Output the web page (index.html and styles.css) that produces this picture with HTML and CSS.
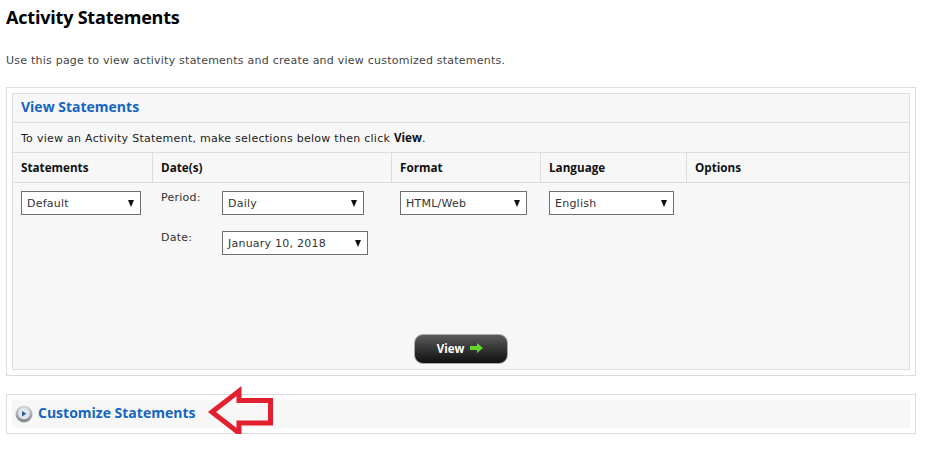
FILE: index.html
```html
<!DOCTYPE html>
<html lang="en">
<head>
<meta charset="utf-8">
<title>Activity Statements</title>
<link rel="stylesheet" href="styles.css">
</head>
<body>
<main class="page">
  <h1 class="page-title">Activity Statements</h1>
  <p class="intro">Use this page to view activity statements and create and view customized statements.</p>

  <section class="panel">
    <div class="panel-inner">
      <h2 class="row row-title section-title">View Statements</h2>
      <p class="row row-hint">To view an Activity Statement, make selections below then click <b>View</b>.</p>
      <div class="grid grid-head">
        <div class="cell">Statements</div>
        <div class="cell">Date(s)</div>
        <div class="cell">Format</div>
        <div class="cell">Language</div>
        <div class="cell">Options</div>
      </div>
      <div class="grid grid-body">
        <div class="col"><div class="select w-statement"><span>Default</span><i class="caret"></i></div></div>
        <div class="col col-dates">
          <div class="date-row">
            <span class="date-label">Period:</span>
            <div class="select w-period"><span>Daily</span><i class="caret"></i></div>
          </div>
          <div class="date-row">
            <span class="date-label">Date:</span>
            <div class="select w-date"><span>January 10, 2018</span><i class="caret"></i></div>
          </div>
        </div>
        <div class="col"><div class="select w-format"><span>HTML/Web</span><i class="caret"></i></div></div>
        <div class="col"><div class="select w-language"><span>English</span><i class="caret"></i></div></div>
        <div class="col"></div>
      </div>
      <div class="actions">
        <button class="view-btn" type="button">View
          <svg class="view-arrow" width="13" height="10" viewBox="0 0 13 10"><path d="M0 3h7V0l6 5-6 5V7H0z" fill="#5fd62c"/></svg>
        </button>
      </div>
    </div>
  </section>

  <section class="panel panel-custom">
    <div class="custom-inner">
      <svg class="expand-icon" width="18" height="18" viewBox="0 0 18 18">
        <defs>
          <linearGradient id="orb" x1="0" y1="0" x2="0" y2="1">
            <stop offset="0" stop-color="#d8dade"/>
            <stop offset="1" stop-color="#7f838b"/>
          </linearGradient>
        </defs>
        <circle cx="9" cy="9" r="8.5" fill="url(#orb)"/>
        <circle cx="9" cy="8.5" r="5.8" fill="#e3e6ec"/>
        <path d="M7 6l4.4 2.7L7 11.4z" fill="#2b5f96"/>
      </svg>
      <h2 class="section-title custom-title">Customize Statements</h2>
    </div>
    <svg class="callout" width="72" height="54" viewBox="0 0 72 54">
      <path d="M7 27 34 6V15.5H65.5V38H34V48Z" fill="none" stroke="#e2202f" stroke-width="5"/>
    </svg>
  </section>
</main>
</body>
</html>
```

FILE: styles.css
```css
* { box-sizing: border-box; }
html, body { margin: 0; background: #fff; }
body { font-family: "DejaVu Sans", sans-serif; font-size: 11px; letter-spacing: 0.23px; color: #222; }
.page { padding: 7px 14px 0 6px; }
.page-title { margin: 0; font: 700 18px/20px "Open Sans", sans-serif; letter-spacing: -0.2px; color: #000; }
.intro { margin: 26px 0 0; line-height: 16px; color: #444; }
.panel { margin-top: 18px; border: 1px solid #ddd; padding: 5px; }
.panel-inner { border: 1px solid #ddd; background: #f7f7f7; }
.row { margin: 0; padding: 0 8px; border-bottom: 1px solid #ddd; }
.row-title { height: 29px; line-height: 26px; }
.row-hint { height: 30px; line-height: 29px; letter-spacing: 0.27px; }
.row-hint b { font-family: "Open Sans", sans-serif; font-size: 11.7px; letter-spacing: 0; color: #111; }
.section-title { font-family: "Open Sans", sans-serif; font-weight: 700; font-size: 14px; letter-spacing: 0; color: #1565c0; }
.grid { display: grid; grid-template-columns: 140px 239px 149px 146px 1fr; }
.grid-head { height: 30px; border-bottom: 1px solid #ddd; color: #111; font: 700 11.7px "Open Sans", sans-serif; letter-spacing: 0; }
.cell { padding: 0 8px; line-height: 28px; border-left: 1px solid #ddd; margin-left: -1px; }
.cell:first-child { border-left: 0; margin-left: 0; }
.grid-body { padding-top: 8px; height: 131px; }
.col { padding-left: 8px; }
.col-dates { display: flex; flex-direction: column; gap: 16px; }
.date-row { display: flex; }
.date-label { width: 61px; line-height: 14px; color: #333; }
.select { display: flex; align-items: center; justify-content: space-between; height: 24px; padding: 0 5px 0 5px; background: #fff; border: 1px solid #6f6f6f; color: #333; }
.caret { width: 0; height: 0; margin-right: 1px; border-left: 3.5px solid transparent; border-right: 3.5px solid transparent; border-top: 7px solid #111; }
.w-statement { width: 120px; }
.w-period { width: 142px; }
.w-date { width: 146px; }
.w-format { width: 127px; }
.w-language { width: 125px; }
.actions { display: flex; justify-content: center; padding-bottom: 5px; height: 55px; align-items: flex-end; }
.view-btn { display: flex; align-items: center; justify-content: center; gap: 6px; width: 94px; height: 30px; padding: 0 2px 2px 0; border: 1px solid #aaa; border-radius: 9px; background: linear-gradient(#5a5a5a, #0f0f0f); color: #fff; font: 700 11.5px "Open Sans", sans-serif; }
.panel-custom { position: relative; margin-top: 18px; height: 40px; }
.custom-inner { display: flex; align-items: center; gap: 5px; height: 28px; padding-left: 3px; background: #f7f7f7; }
.custom-title { margin: 0; line-height: 24px; padding-bottom: 2px; }
.callout { position: absolute; left: 198px; top: -10px; }
```
